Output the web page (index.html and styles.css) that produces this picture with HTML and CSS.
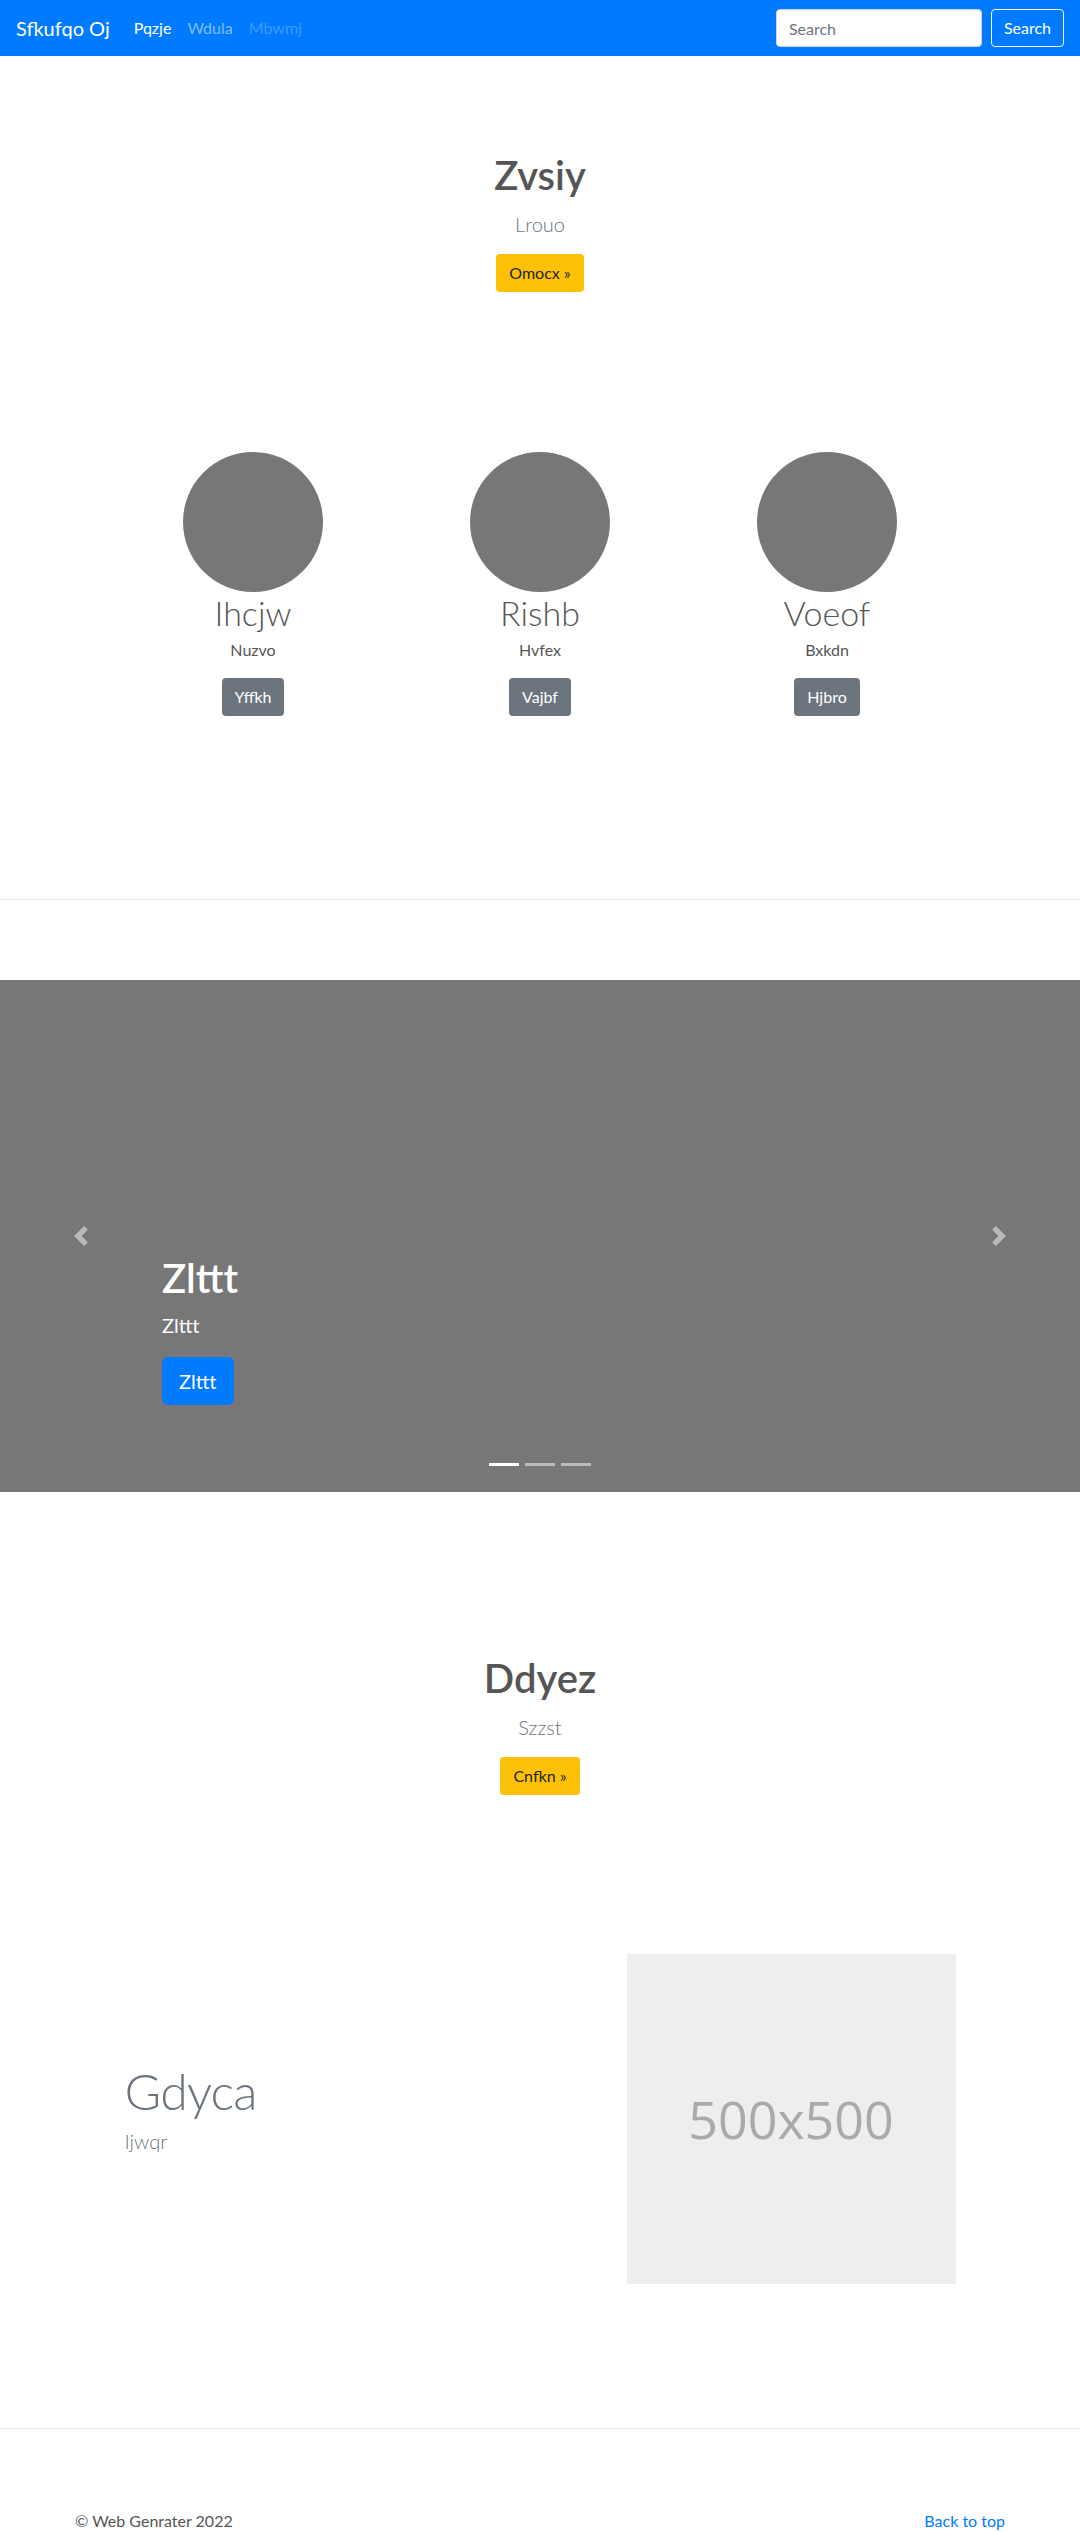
FILE: index.html
```html
<!DOCTYPE html>
<html lang="en">
<head>
<meta charset="utf-8">
<title>Sfkufqo Oj</title>
<link rel="stylesheet" href="styles.css">
</head>
<body>
<nav class="navbar">
  <a class="brand" href="#">Sfkufqo Oj</a>
  <ul class="nav">
    <li><a class="nav-link active" href="#">Pqzje</a></li>
    <li><a class="nav-link" href="#">Wdula</a></li>
    <li><a class="nav-link disabled" href="#">Mbwmj</a></li>
  </ul>
  <form class="search">
    <input class="search-input" type="text" placeholder="Search">
    <button class="btn btn-outline-light" type="button">Search</button>
  </form>
</nav>

<main>
  <section class="hero hero-top">
    <h1 class="hero-title">Zvsiy</h1>
    <p class="lead hero-sub">Lrouo</p>
    <a class="btn btn-warning" href="#">Omocx »</a>
  </section>

  <section class="marketing">
    <div class="marketing-col">
      <div class="avatar"></div>
      <h2 class="name">Ihcjw</h2>
      <p class="desc">Nuzvo</p>
      <a class="btn btn-secondary" href="#">Yffkh</a>
    </div>
    <div class="marketing-col">
      <div class="avatar"></div>
      <h2 class="name">Rishb</h2>
      <p class="desc">Hvfex</p>
      <a class="btn btn-secondary" href="#">Vajbf</a>
    </div>
    <div class="marketing-col">
      <div class="avatar"></div>
      <h2 class="name">Voeof</h2>
      <p class="desc">Bxkdn</p>
      <a class="btn btn-secondary" href="#">Hjbro</a>
    </div>
  </section>

  <hr class="divider">

  <div class="carousel">
    <a class="control control-prev" href="#">
      <svg class="control-icon" viewBox="0 0 8 8" width="20" height="20"><path d="M5.25 0l-4 4 4 4 1.5-1.5L4.25 4l2.5-2.5L5.25 0z"/></svg>
    </a>
    <a class="control control-next" href="#">
      <svg class="control-icon" viewBox="0 0 8 8" width="20" height="20"><path d="M2.75 0l-1.5 1.5L3.75 4l-2.5 2.5L2.75 8l4-4-4-4z"/></svg>
    </a>
    <div class="caption">
      <h1 class="caption-title">Zlttt</h1>
      <p class="caption-text">Zlttt</p>
      <a class="btn btn-primary btn-lg" href="#">Zlttt</a>
    </div>
    <ol class="indicators">
      <li class="active"></li>
      <li></li>
      <li></li>
    </ol>
  </div>

  <section class="hero hero-second">
    <h1 class="hero-title">Ddyez</h1>
    <p class="lead hero-sub">Szzst</p>
    <a class="btn btn-warning" href="#">Cnfkn »</a>
  </section>

  <section class="featurette">
    <div class="featurette-text">
      <h2 class="featurette-heading">Gdyca</h2>
      <p class="lead featurette-lead">Ijwqr</p>
    </div>
    <div class="placeholder"><span>500x500</span></div>
  </section>

  <hr class="divider">

  <footer class="footer">
    <p class="copy">© Web Genrater 2022</p>
    <p class="back"><a href="#">Back to top</a></p>
  </footer>
</main>
</body>
</html>
```

FILE: styles.css
```css
* { box-sizing: border-box; }

body {
  margin: 0;
  font-family: Lato, "Noto Sans", "Open Sans", sans-serif;
  font-size: 16px;
  line-height: 1.5;
  color: #555;
  background: #fff;
}

a { text-decoration: none; }

/* navbar */
.navbar {
  display: flex;
  align-items: center;
  height: 56px;
  padding: 0 16px;
  background: #007bff;
}
.brand {
  font-size: 20px;
  line-height: 30px;
  color: #fff;
  margin-right: 16px;
}
.nav {
  display: flex;
  list-style: none;
  margin: 0;
  padding: 0;
  flex: 1;
}
.nav-link {
  display: block;
  padding: 8px;
  color: rgba(255, 255, 255, 0.5);
}
.nav-link.active { color: #fff; }
.nav-link.disabled { color: rgba(255, 255, 255, 0.25); }

.search {
  display: flex;
  gap: 9px;
  margin: 0;
}
.search-input {
  width: 206px;
  height: 38px;
  padding: 6px 12px;
  border: 1px solid #ced4da;
  border-radius: 4px;
  font-family: inherit;
  font-size: 16px;
  color: #495057;
}
.search-input::placeholder { color: #6c757d; }

/* buttons */
.btn {
  display: inline-block;
  padding: 6px 12px;
  font-family: inherit;
  font-size: 16px;
  line-height: 24px;
  border: 1px solid transparent;
  border-radius: 4px;
  text-align: center;
  cursor: pointer;
}
.btn-outline-light {
  background: transparent;
  border-color: #f8f9fa;
  color: #fff;
}
.btn-warning { background: #ffc107; color: #212529; }
.btn-secondary { background: #6c757d; color: #fff; }
.btn-primary { background: #007bff; color: #fff; }
.btn-lg {
  padding: 8px 16px;
  font-size: 20px;
  line-height: 30px;
  border-radius: 6px;
}

/* hero */
.hero {
  display: flex;
  flex-direction: column;
  align-items: center;
  text-align: center;
}
.hero-top { padding-top: 95px; }
.hero-second { padding-top: 162px; }
.hero-title {
  margin: 0 0 10px;
  font-size: 40px;
  font-weight: 600;
  line-height: 48px;
  color: #555;
}
.lead {
  font-size: 20px;
  font-weight: 300;
  line-height: 30px;
}
.hero-sub {
  margin: 0 0 15px;
  color: #6c757d;
}

/* marketing */
.marketing {
  width: 861px;
  margin: 0 auto;
  padding: 160px 0 103px;
  display: grid;
  grid-template-columns: repeat(3, 1fr);
}
.marketing-col {
  display: flex;
  flex-direction: column;
  align-items: center;
  text-align: center;
  padding: 0 15px;
}
.avatar {
  width: 140px;
  height: 140px;
  border-radius: 50%;
  background: #777;
}
.name {
  margin: 0 0 4px;
  font-size: 34px;
  font-weight: 300;
  line-height: 42px;
  color: #555;
}
.desc {
  margin: 0 0 16px;
  font-size: 16px;
  line-height: 24px;
}

/* divider */
.divider {
  margin: 80px 0;
  border: 0;
  border-top: 1px solid rgba(0, 0, 0, 0.1);
}

/* carousel */
.carousel {
  position: relative;
  height: 512px;
  background: #777;
}
.control {
  position: absolute;
  top: 0;
  bottom: 0;
  width: 15%;
  display: flex;
  align-items: center;
  justify-content: center;
  opacity: 0.5;
}
.control-prev { left: 0; }
.control-next { right: 0; }
.control-icon { fill: #fff; display: block; }

.caption {
  position: absolute;
  left: 15%;
  right: 15%;
  bottom: 87px;
  display: flex;
  flex-direction: column;
  align-items: flex-start;
  color: #fff;
}
.caption-title {
  margin: 0 0 8px;
  font-size: 40px;
  font-weight: 600;
  line-height: 48px;
}
.caption-text {
  margin: 0 0 17px;
  font-size: 20px;
  line-height: 30px;
}

.indicators {
  position: absolute;
  left: 0;
  right: 0;
  bottom: 26px;
  margin: 0;
  padding: 0;
  list-style: none;
  display: flex;
  justify-content: center;
}
.indicators li {
  width: 30px;
  height: 3px;
  margin: 0 3px;
  background: #fff;
  opacity: 0.5;
}
.indicators li.active { opacity: 1; }

/* featurette */
.featurette {
  width: 831px;
  margin: 159px auto 0;
  padding-bottom: 64px;
  display: grid;
  grid-template-columns: 487px 329px;
  column-gap: 15px;
  align-items: center;
}
.featurette-heading {
  margin: 0 0 10px;
  font-size: 50px;
  font-weight: 300;
  line-height: 1;
  letter-spacing: -0.8px;
  color: #6c757d;
}
.featurette-lead {
  margin: 0 0 16px;
  color: #6c757d;
}
.placeholder {
  height: 330px;
  background: #eee;
  display: flex;
  align-items: center;
  justify-content: center;
}
.placeholder span {
  font-family: "Open Sans", "Noto Sans", sans-serif;
  font-size: 52px;
  color: #aaa;
}

/* footer */
.footer {
  width: 960px;
  margin: 0 auto;
  padding: 0 15px;
  display: flex;
  justify-content: space-between;
}
.footer p { margin: 0; }
.back a { color: #007bff; }
```
